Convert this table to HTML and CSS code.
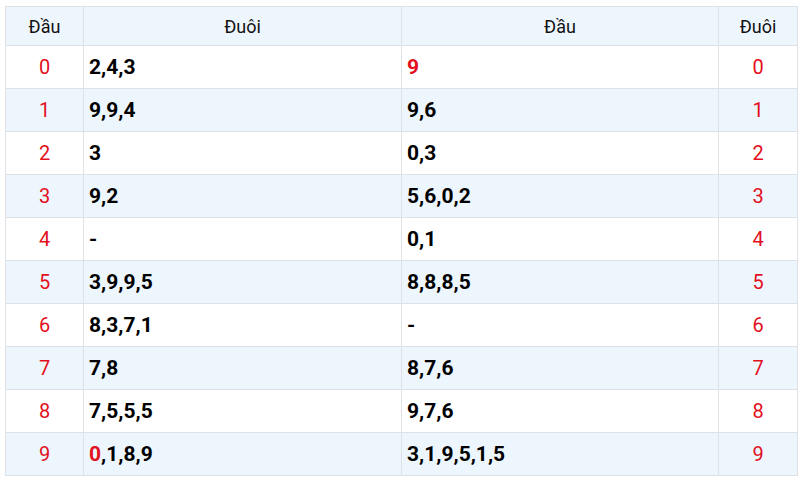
FILE: index.html
```html
<!DOCTYPE html>
<html>
<head>
<meta charset="utf-8">
<link rel="stylesheet" href="styles.css">
</head>
<body>
<div class="wrap">
<table class="lt">
  <colgroup>
    <col class="c-num"><col class="c-val"><col class="c-val2"><col class="c-num2">
  </colgroup>
  <thead>
    <tr><th>Đầu</th><th>Đuôi</th><th>Đầu</th><th>Đuôi</th></tr>
  </thead>
  <tbody>
    <tr><td class="n">0</td><td class="v">2,4,3</td><td class="v"><span class="r">9</span></td><td class="n">0</td></tr>
    <tr><td class="n">1</td><td class="v">9,9,4</td><td class="v">9,6</td><td class="n">1</td></tr>
    <tr><td class="n">2</td><td class="v">3</td><td class="v">0,3</td><td class="n">2</td></tr>
    <tr><td class="n">3</td><td class="v">9,2</td><td class="v">5,6,0,2</td><td class="n">3</td></tr>
    <tr><td class="n">4</td><td class="v">-</td><td class="v">0,1</td><td class="n">4</td></tr>
    <tr><td class="n">5</td><td class="v">3,9,9,5</td><td class="v">8,8,8,5</td><td class="n">5</td></tr>
    <tr><td class="n">6</td><td class="v">8,3,7,1</td><td class="v">-</td><td class="n">6</td></tr>
    <tr><td class="n">7</td><td class="v">7,8</td><td class="v">8,7,6</td><td class="n">7</td></tr>
    <tr><td class="n">8</td><td class="v">7,5,5,5</td><td class="v">9,7,6</td><td class="n">8</td></tr>
    <tr><td class="n">9</td><td class="v"><span class="r">0</span>,1,8,9</td><td class="v">3,1,9,5,1,5</td><td class="n">9</td></tr>
  </tbody>
</table>
</div>
</body>
</html>
```
FILE: styles.css
```css
html, body {
  margin: 0;
  padding: 0;
  background: #fff;
}
body {
  font-family: Roboto, "Liberation Sans", sans-serif;
}
.wrap {
  padding: 6px 3px 0 5px;
}
.lt {
  border-collapse: collapse;
  width: 792px;
  table-layout: fixed;
}
.c-num { width: 78px; }
.c-val { width: 318px; }
.c-val2 { width: 317px; }
.c-num2 { width: 79px; }
.lt th, .lt td {
  border: 1px solid #dee2e6;
  padding: 0 5px;
}
.lt th {
  height: 38px;
  font-weight: 400;
  font-size: 18px;
  color: #111;
  text-align: center;
  background: #eef6fd;
}
.lt td {
  height: 42px;
}
.lt tbody tr:nth-child(even) td {
  background: #eef6fd;
}
.n {
  text-align: center;
  color: #e3101d;
  font-size: 20px;
}
.v {
  font-weight: 700;
  font-size: 21px;
  color: #000;
}
.r {
  color: #e3101d;
}
```
